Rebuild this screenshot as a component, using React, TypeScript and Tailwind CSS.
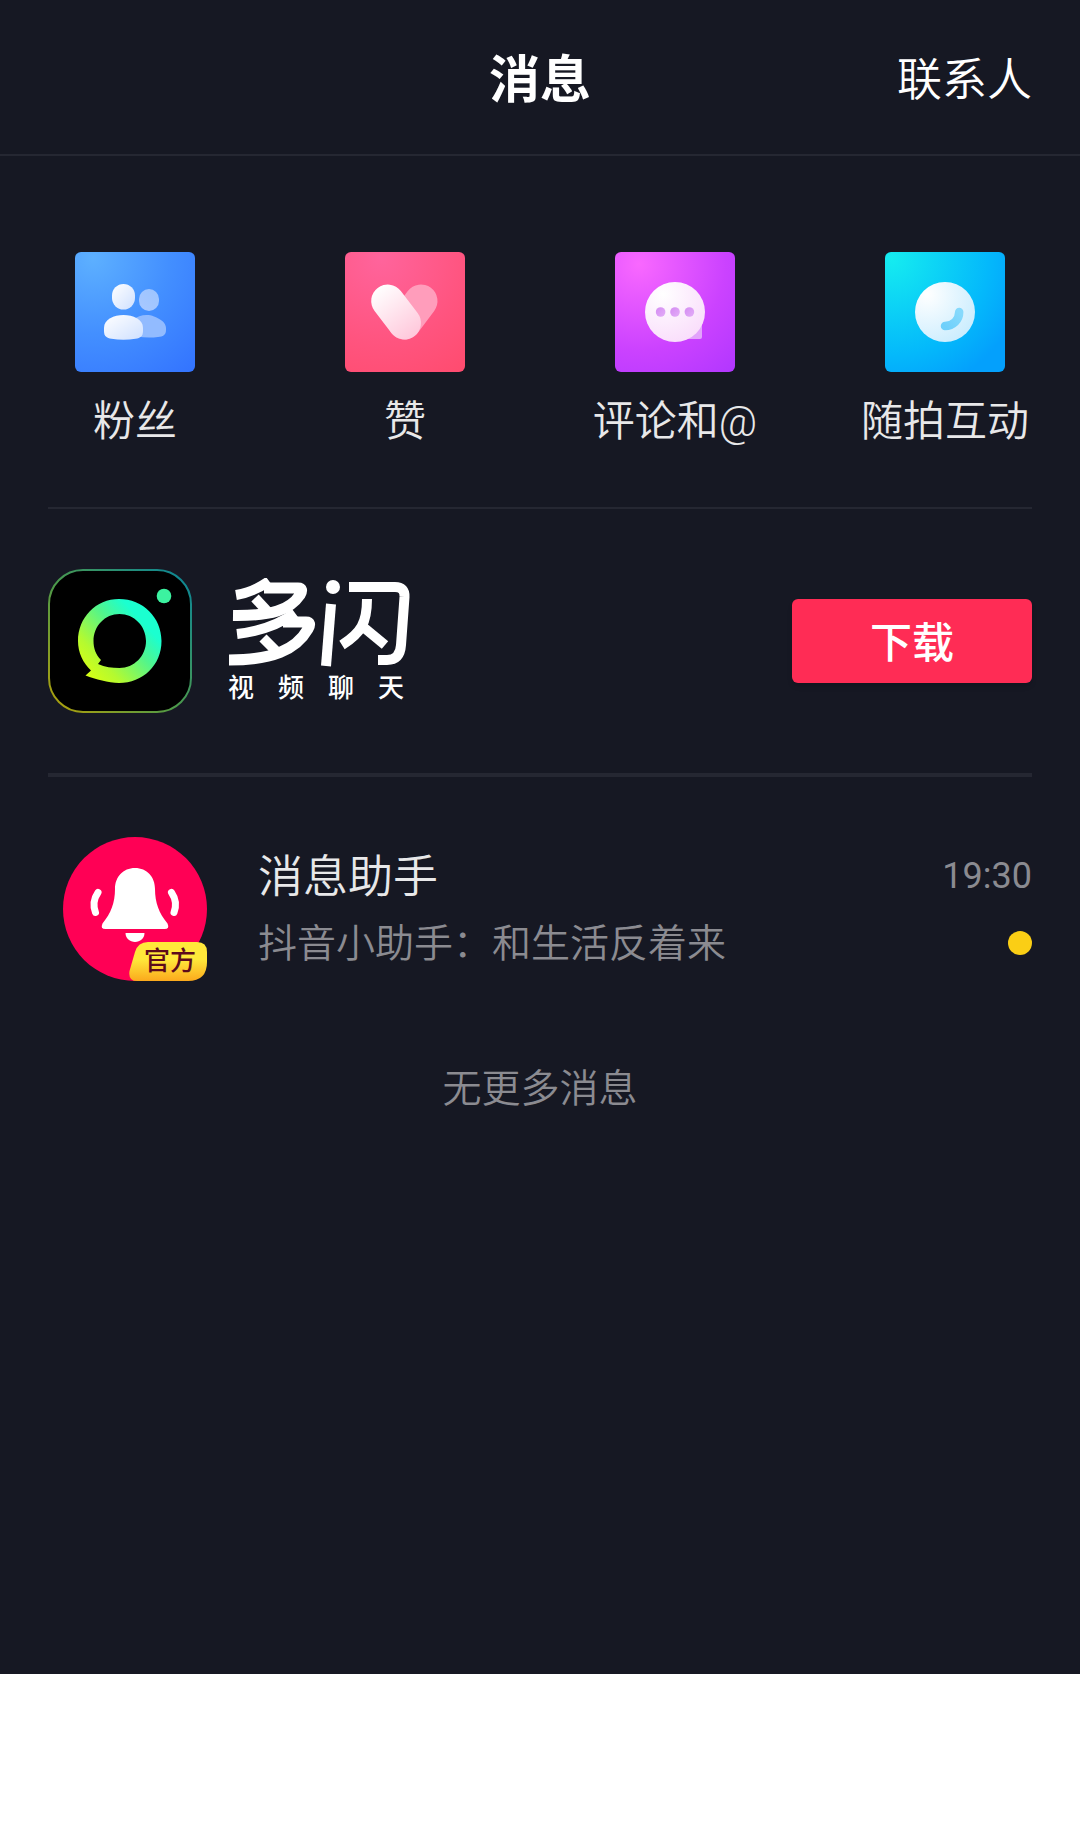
import React from "react";

function FansIcon() {
  return (
    <svg viewBox="0 0 120 120" className="h-full w-full" aria-hidden="true">
      <defs>
        <linearGradient id="fansA" x1="0" y1="0" x2="1" y2="1">
          <stop offset="0" stopColor="#ffffff" />
          <stop offset="1" stopColor="#cfe0ff" />
        </linearGradient>
        <linearGradient id="fansB" x1="1" y1="0" x2="0" y2="1">
          <stop offset="0" stopColor="#9cc4ff" />
          <stop offset="1" stopColor="#a9c8ff" />
        </linearGradient>
      </defs>
      <rect x="64" y="37" width="20" height="22" rx="10" fill="url(#fansB)" />
      <path d="M58 68C64 62.500 73 62 79 64.500C86 67 91 71 91 76V78C91 83 88 84.500 83 85C77 85.800 69 85.800 62 84.500Z" fill="#92bbff" />
      <rect x="37" y="32" width="23" height="25.500" rx="11.500" fill="url(#fansA)" />
      <path d="M48.500 63C58 63 68 67 68 76V79C68 84 65.500 86 60.500 86.800C53 88 44 88 36.500 86.800C31.500 86 29 84 29 79V76C29 67 39 63 48.500 63Z" fill="url(#fansA)" />
    </svg>
  );
}

function LikeIcon() {
  return (
    <svg viewBox="0 0 120 120" className="h-full w-full" aria-hidden="true">
      <defs>
        <linearGradient id="likeA" gradientUnits="userSpaceOnUse" x1="32" y1="36" x2="70" y2="86">
          <stop offset="0" stopColor="#ffffff" />
          <stop offset="1" stopColor="#ffc6da" />
        </linearGradient>
      </defs>
      <path d="M76 49L59.500 71" stroke="#ff9dbb" strokeWidth="33" strokeLinecap="round" />
      <path d="M42.700 49L59.500 71" stroke="url(#likeA)" strokeWidth="33" strokeLinecap="round" />
    </svg>
  );
}

function CommentIcon() {
  return (
    <svg viewBox="0 0 120 120" className="h-full w-full" aria-hidden="true">
      <defs>
        <radialGradient id="comA" cx="0.3" cy="0.2" r="0.9">
          <stop offset="0" stopColor="#ffffff" />
          <stop offset="1" stopColor="#f9dcfb" />
        </radialGradient>
        <linearGradient id="comB" x1="0" y1="0" x2="1" y2="1">
          <stop offset="0" stopColor="#d48bf2" />
          <stop offset="1" stopColor="#e3aef8" />
        </linearGradient>
      </defs>
      <path d="M87 70V85Q87 87 85 87H70Z" fill="#e2a3fb" />
      <circle cx="60" cy="60" r="30" fill="url(#comA)" />
      <circle cx="45.600" cy="60" r="4.800" fill="url(#comB)" />
      <circle cx="60" cy="60" r="4.800" fill="url(#comB)" />
      <circle cx="74.400" cy="60" r="4.800" fill="url(#comB)" />
    </svg>
  );
}

function MomentIcon() {
  return (
    <svg viewBox="0 0 120 120" className="h-full w-full" aria-hidden="true">
      <defs>
        <radialGradient id="momA" cx="0.2" cy="0.2" r="0.95">
          <stop offset="0" stopColor="#ffffff" />
          <stop offset="1" stopColor="#c9ecfe" />
        </radialGradient>
        <linearGradient id="momB" x1="1" y1="0" x2="0" y2="1">
          <stop offset="0" stopColor="#85d9fc" />
          <stop offset="1" stopColor="#6fd0fb" />
        </linearGradient>
      </defs>
      <circle cx="60" cy="60" r="30" fill="url(#momA)" />
      <path d="M74.200 60C74.200 68 68 74 60 74" stroke="url(#momB)" strokeWidth="8.500" strokeLinecap="round" fill="none" />
    </svg>
  );
}

function DuoshanIcon() {
  return (
    <svg viewBox="0 0 144 144" className="h-36 w-36 shrink-0" aria-hidden="true">
      <defs>
        <linearGradient id="duoRing" gradientUnits="userSpaceOnUse" x1="36" y1="108" x2="106" y2="44">
          <stop offset="0" stopColor="#dcff10" />
          <stop offset="0.25" stopColor="#b4fa30" />
          <stop offset="0.6" stopColor="#52f58c" />
          <stop offset="0.85" stopColor="#1bffd0" />
        </linearGradient>
        <linearGradient id="duoEdge" x1="0" y1="1" x2="1" y2="0">
          <stop offset="0" stopColor="#b4a008" />
          <stop offset="0.45" stopColor="#4f9a48" />
          <stop offset="1" stopColor="#08869a" />
        </linearGradient>
      </defs>
      <rect x="1" y="1" width="142" height="142" rx="34" fill="#000000" stroke="url(#duoEdge)" strokeWidth="2" />
      <path
        fillRule="evenodd"
        fill="url(#duoRing)"
        d="M71 30C95 30 113.500 48.500 113.500 72C113.500 96 95 114 71 114C60 113.500 48 110.500 37.500 106.500L43 101.500C35 94 30 83.500 30 72C30 48.500 48 30 71 30ZM71.500 45C57 45 45.500 57 45.500 72C45.500 79.500 48 86 53 91L50 95C57 98 64 99 71.500 99C86 99 98 87 98 72C98 57 86 45 71.500 45Z"
      />
      <circle cx="116" cy="27" r="7.300" fill="#3cf2a0" />
    </svg>
  );
}

function DuoshanWordmark() {
  return (
    <svg viewBox="0 0 182 90" className="h-[90px] w-[182px]" role="img" aria-label="多闪">
      <g fill="none" stroke="#ffffff" strokeWidth="10" strokeLinejoin="round">
        <path d="M8 17Q26 14 41 3" />
        <path d="M36 10H70Q76 10 72 17C62 32 44 38 5 37.500" strokeWidth="11" />
        <path d="M27 20L40 34" />
        <path d="M9 56C34 53 52 46 67 35" />
        <path d="M55 44H78Q84 44 80 51C68 72 44 82 1 82" strokeWidth="11" />
        <path d="M35 60L48 73" />
        <path d="M103 26L98 88" />
        <path d="M121 9H167Q177 9 176.500 19L173 67Q172 82 159 82H150" />
        <path d="M139 21C139 45 133 55 114 67" />
        <path d="M134 48L157 67" />
      </g>
      <circle cx="105" cy="9" r="7" fill="#ffffff" />
    </svg>
  );
}

function BellAvatar() {
  return (
    <svg viewBox="0 0 144 144" className="h-full w-full" aria-hidden="true">
      <circle cx="72" cy="72" r="72" fill="#ff0055" />
      <path
        d="M72 31C84 31 92 40 92 52C92 66 96 76 104.500 86.500Q107 92 101.500 92H42.500Q37 92 39.500 86.500C48 76 52 66 52 52C52 40 60 31 72 31Z"
        fill="#ffffff"
      />
      <path d="M62.500 96H81.500C81.500 101.500 77 105 72 105C67 105 62.500 101.500 62.500 96Z" fill="#ffffff" />
      <path d="M35 55.500Q28.500 65 32.500 75.500M108.500 55.500Q115 65 111 75.500" stroke="#ffffff" strokeWidth="7" strokeLinecap="round" fill="none" />
    </svg>
  );
}

function BadgeShape() {
  return (
    <svg viewBox="0 0 78 39" className="absolute inset-0 h-full w-full" aria-hidden="true">
      <defs>
        <linearGradient id="badge" x1="0" y1="0" x2="0" y2="1">
          <stop offset="0.45" stopColor="#ffe83a" />
          <stop offset="1" stopColor="#fba91d" />
        </linearGradient>
      </defs>
      <path d="M19 0H68Q78 0 78 10V20Q78 39 59 39H8Q-1 39 .5 29L6 10Q9 0 19 0Z" fill="url(#badge)" />
    </svg>
  );
}

const shortcuts = [
  { label: "粉丝", Icon: FansIcon, tile: "bg-[radial-gradient(circle_at_15%_5%,#5db0ff,#438fff_50%,#3170ff_105%)]" },
  { label: "赞", Icon: LikeIcon, tile: "bg-[radial-gradient(circle_at_30%_5%,#ff649c,#ff547f_60%,#ff4a6c_105%)]" },
  { label: "评论和@", Icon: CommentIcon, tile: "bg-[radial-gradient(circle_at_20%_10%,#f968ff,#cb42ff_60%,#ae35ff_105%)]" },
  { label: "随拍互动", Icon: MomentIcon, tile: "bg-[radial-gradient(circle_at_5%_5%,#15ecf0,#04b9fb_60%,#04a0fc_85%)]" },
];

export default function App() {
  return (
    <div className="min-h-screen bg-white font-['Roboto','Noto_Sans_CJK_SC',sans-serif]">
      <main className="min-h-[1674px] bg-[#161823] text-[#e8e8e9]">
        <header className="grid grid-cols-3 items-center border-b-2 border-[#252732] px-12 pt-11 pb-9 text-white">
          <h1 className="col-start-2 text-center text-[51px] leading-[74px] font-bold">消息</h1>
          <a href="#contacts" className="justify-self-end text-[45px] leading-[74px] font-[350]">联系人</a>
        </header>

        <nav className="grid grid-cols-4 pt-24 pb-[57px]" aria-label="互动">
          {shortcuts.map(({ label, Icon, tile }) => (
            <button key={label} type="button" className="flex flex-col items-center gap-[22px]">
              <span className={`h-[120px] w-[120px] overflow-hidden rounded-md ${tile}`}>
                <Icon />
              </span>
              <span className="text-[42px] leading-[56px] font-[350] whitespace-nowrap">{label}</span>
            </button>
          ))}
        </nav>

        <section className="mx-12 flex items-center border-t-2 border-b-4 border-[#252732] py-[60px]">
          <DuoshanIcon />
          <div className="ml-9 flex flex-col gap-1">
            <DuoshanWordmark />
            <p className="flex w-[176px] justify-between text-[26px] leading-8 font-medium text-white">
              <span>视</span>
              <span>频</span>
              <span>聊</span>
              <span>天</span>
            </p>
          </div>
          <button type="button" className="ml-auto h-[84px] w-60 rounded-md bg-[#ff2c55] pt-1 text-[42px] font-medium text-white shadow-md">
            下载
          </button>
        </section>

        <a href="#assistant" className="flex items-center py-[60px] pr-12 pl-[63px]">
          <span className="relative h-36 w-36 shrink-0">
            <BellAvatar />
            <span className="absolute right-0 bottom-0 flex h-[39px] w-[78px] items-center justify-center">
              <BadgeShape />
              <span className="relative pl-1 text-[26px] leading-[39px] font-medium text-[#5c0a1c]">官方</span>
            </span>
          </span>
          <span className="ml-[51px] flex flex-1 flex-col">
            <span className="flex items-center justify-between">
              <span className="pt-1 text-[45px] leading-[63px] font-[350]">消息助手</span>
              <time className="text-4xl text-[#8b8b91]">19:30</time>
            </span>
            <span className="flex items-center justify-between">
              <span className="pt-1 text-[39px] leading-[63px] font-[350] text-[#8b8b91]">抖音小助手：和生活反着来</span>
              <span className="h-6 w-6 rounded-full bg-[#face15]" />
            </span>
          </span>
        </a>

        <p className="pt-5 text-center text-[39px] leading-[56px] font-[350] text-[#8b8b91]">无更多消息</p>
      </main>
    </div>
  );
}
